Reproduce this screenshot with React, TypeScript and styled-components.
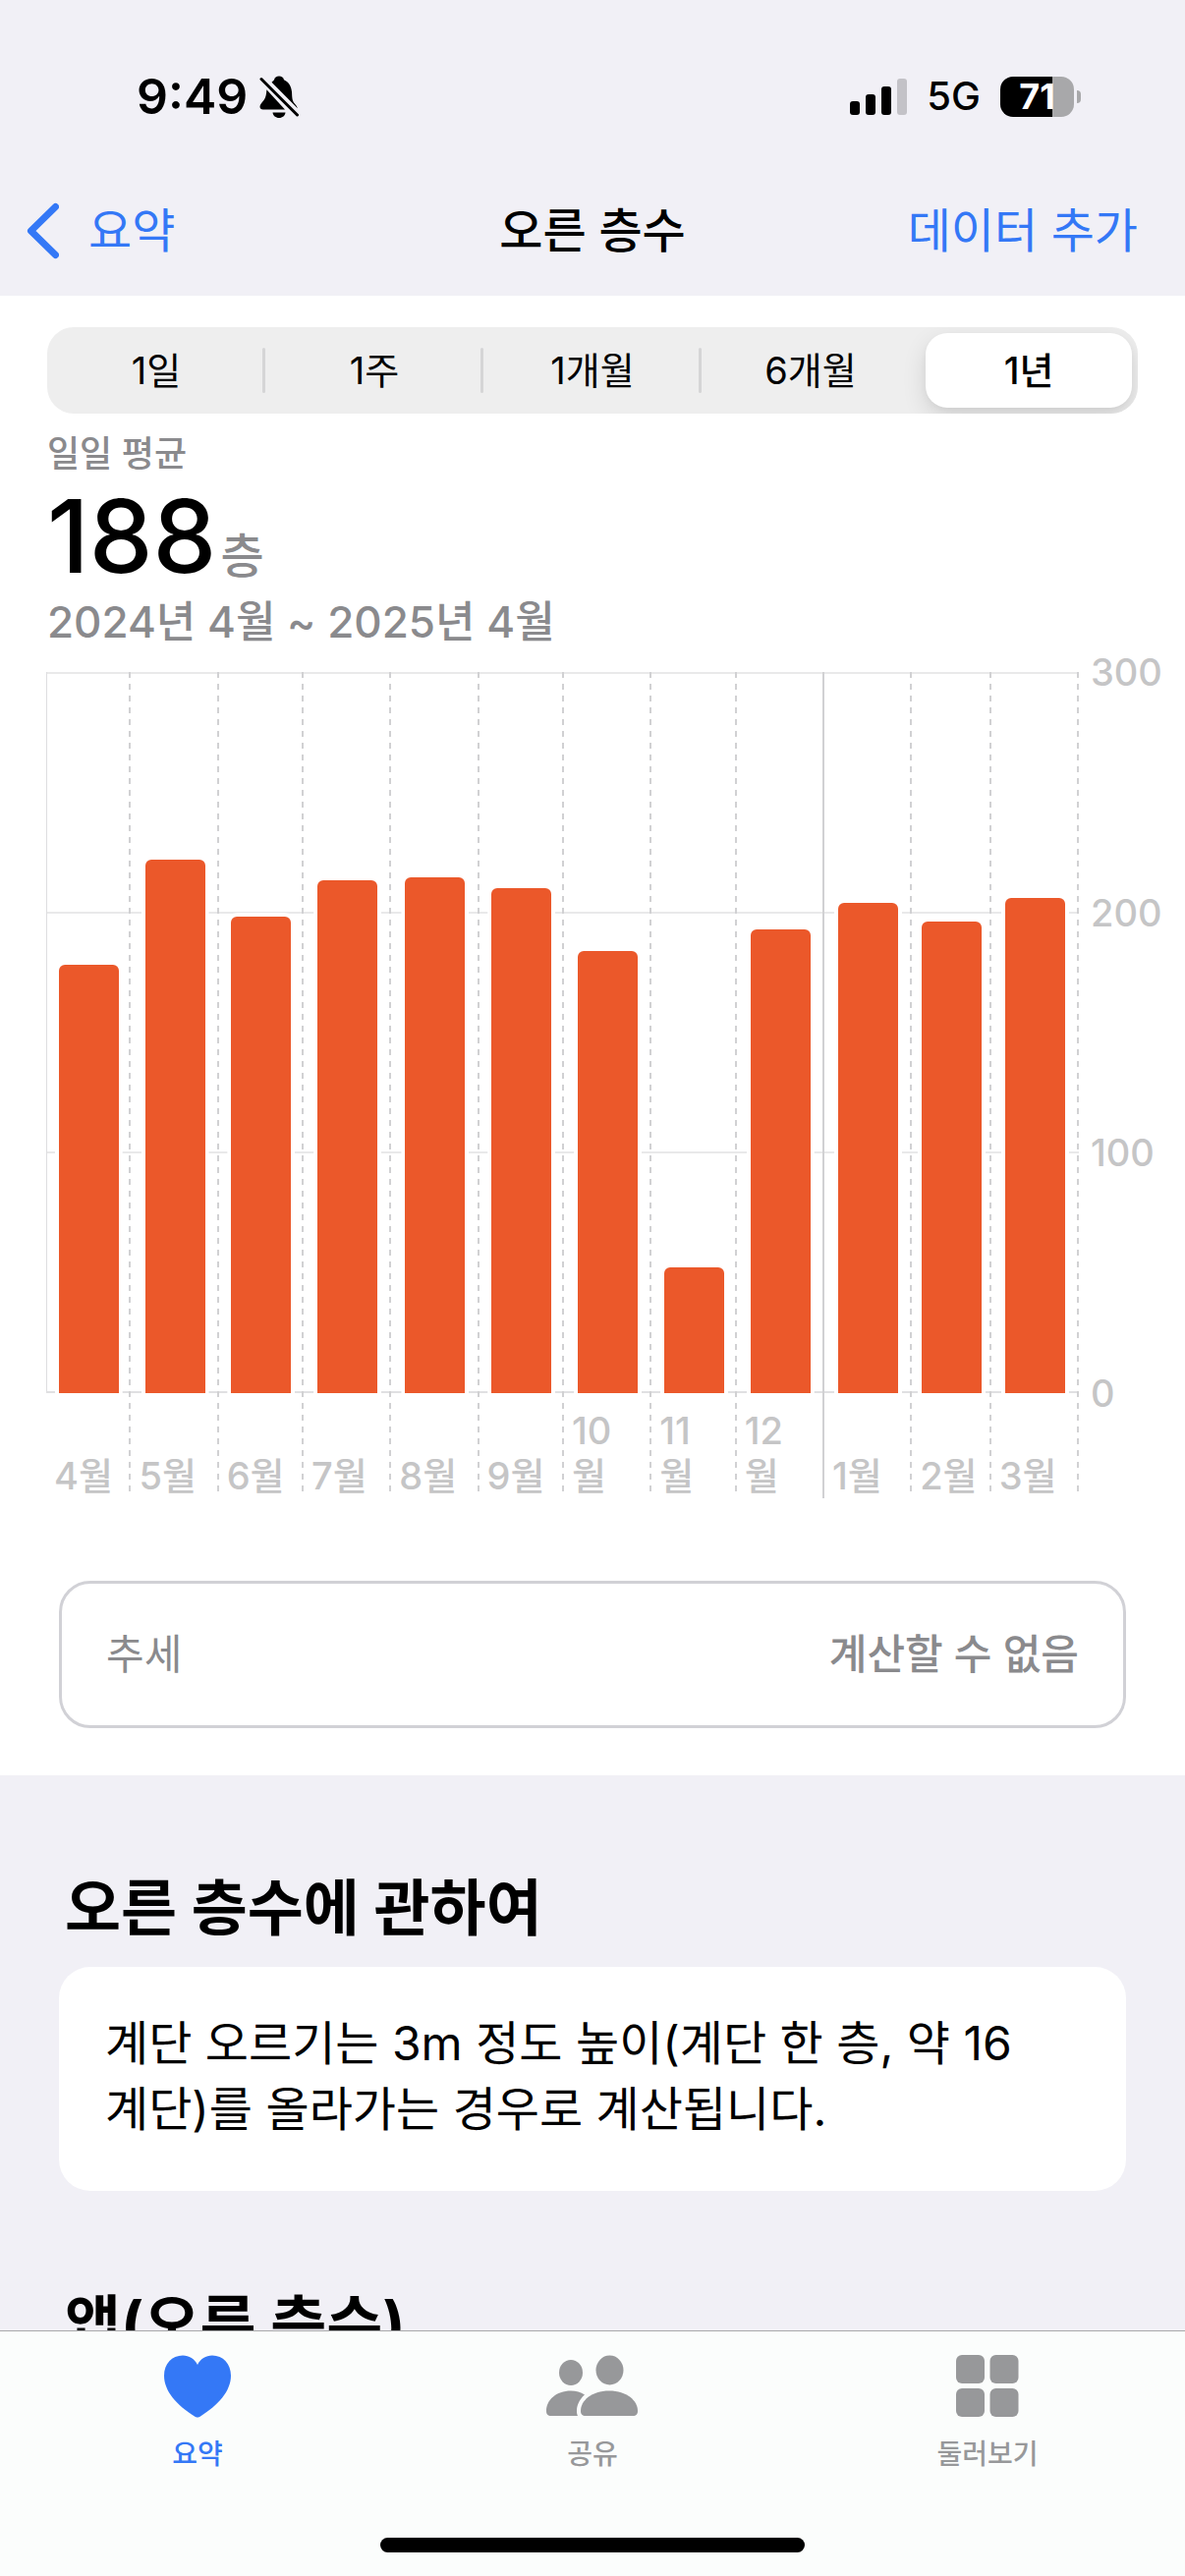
import React, { useState } from "react";
import styled, { createGlobalStyle } from "styled-components";

const GlobalStyle = createGlobalStyle`
  *, *::before, *::after { box-sizing: border-box; }
  body {
    margin: 0;
    background: #f1f0f6;
    color: #000;
    font-family: Inter, "Noto Sans CJK KR", sans-serif;
  }
  button, fieldset, input, h1, h2, p, dl, dt, dd {
    margin: 0;
    padding: 0;
    border: 0;
    font: inherit;
    color: inherit;
    background: none;
  }
`;

const Screen = styled.div`
  display: flex;
  flex-direction: column;
  height: 100vh;
  overflow: hidden;
`;

/* ---------- status bar ---------- */

const StatusBar = styled.div`
  display: flex;
  justify-content: space-between;
  align-items: center;
  height: 168px;
  padding: 28px 106px 0 139px;
`;

const StatusGroup = styled.div<{ $gap: number }>`
  display: flex;
  align-items: center;
  gap: ${(p) => p.$gap}px;
`;

const Clock = styled.span`
  font-size: 50px;
  line-height: 56px;
  font-weight: 600;
`;

const Signal = styled.span`
  display: flex;
  align-items: flex-end;
  gap: 6px;
  height: 38px;
`;

const SignalBar = styled.i<{ $height: number; $off?: boolean }>`
  width: 10px;
  height: ${(p) => p.$height}px;
  border-radius: 3px;
  background: ${(p) => (p.$off ? "#c3c2c7" : "#000")};
`;

const Network = styled.span`
  font-size: 40px;
  line-height: 44px;
  font-weight: 500;
`;

const BatteryWrap = styled.span`
  display: flex;
  align-items: center;
  gap: 3px;
`;

const BatteryBody = styled.span`
  width: 75px;
  height: 41px;
  border-radius: 13px;
  background: linear-gradient(to right, #000 71%, #a8a8aa 71%);
  color: #fff;
  font-size: 36px;
  line-height: 41px;
  font-weight: 700;
  text-align: center;
`;

const BatteryCap = styled.i`
  width: 4px;
  height: 13px;
  border-radius: 0 4px 4px 0;
  background: #a8a8aa;
`;

/* ---------- navigation bar ---------- */

const NavBar = styled.header`
  display: grid;
  grid-template-columns: 1fr auto 1fr;
  align-items: center;
  height: 133px;
  padding: 0 26px;
  font-size: 48px;
  line-height: 66px;
`;

const NavButton = styled.button<{ $end?: boolean }>`
  display: flex;
  align-items: center;
  gap: 30px;
  justify-self: ${(p) => (p.$end ? "end" : "start")};
  padding-right: ${(p) => (p.$end ? 22 : 0)}px;
  color: #3478f6;
  cursor: pointer;
`;

const NavTitle = styled.h1`
  font-weight: 500;
`;

/* ---------- content ---------- */

const Content = styled.main`
  flex: 1;
  min-height: 0;
  overflow-y: auto;
  scrollbar-width: none;
`;

const DataPanel = styled.section`
  padding: 32px 0 48px;
  background: #fff;
`;

const Segments = styled.fieldset`
  display: flex;
  height: 88px;
  margin: 0 48px;
  border-radius: 27px;
  background: #eee;
  overflow: hidden;
`;

const Segment = styled.label<{ $divided: boolean }>`
  display: flex;
  flex: 1;
  align-items: center;
  font-size: 38px;
  line-height: 46px;
  cursor: pointer;

  &::after {
    content: "";
    width: 3px;
    height: 46px;
    border-radius: 2px;
    background: ${(p) => (p.$divided ? "#d5d5d6" : "transparent")};
  }
`;

const SegmentInput = styled.input`
  appearance: none;
  width: 0;
  height: 0;
`;

const SegmentText = styled.span`
  display: flex;
  flex: 1;
  align-items: center;
  justify-content: center;
  height: 76px;
  margin: 0 3px 0 6px;
  border-radius: 22px;

  ${SegmentInput}:checked + & {
    background: #fff;
    font-weight: 500;
    box-shadow: 0 9px 24px rgba(0, 0, 0, 0.12), 0 3px 6px rgba(0, 0, 0, 0.04);
  }
`;

const Summary = styled.div`
  display: flex;
  flex-direction: column;
  padding: 16px 48px 0;
  color: #8a8a8d;
  font-weight: 500;
`;

const SummaryLabel = styled.span`
  font-size: 36px;
  line-height: 50px;
`;

const SummaryValue = styled.span`
  display: flex;
  align-items: baseline;
  gap: 4px;
  font-size: 48px;
  line-height: 60px;
`;

const SummaryNumber = styled.strong`
  color: #000;
  font-size: 103px;
  line-height: 118px;
  font-weight: 500;
`;

const SummaryRange = styled.span`
  font-size: 44px;
  line-height: 56px;
`;

/* ---------- chart ---------- */

const Chart = styled.div`
  display: flex;
  gap: 12px;
  margin-top: 23px;
  padding-left: 47px;
`;

const Plot = styled.div`
  display: grid;
  flex: 1;
  grid-template-rows: 734px 107px;
`;

const GridBands = styled.div`
  display: grid;
  grid-area: 1 / 1;
  grid-template-rows: repeat(3, 1fr);
  border-left: 1px solid #dedee0;
  border-bottom: 2px solid #e0e0e2;
`;

const Band = styled.i`
  border-top: 2px solid #e9e9ea;
`;

const Months = styled.div`
  display: flex;
  grid-area: 1 / 1 / 3 / 2;
`;

const Month = styled.div<{ $days: number; $yearEnd: boolean }>`
  display: grid;
  flex: ${(p) => p.$days} 0 0;
  min-width: 0;
  grid-template-rows: 734px 107px;
  background: ${(p) =>
      p.$yearEnd
        ? "linear-gradient(#d1d1d3, #d1d1d3)"
        : "repeating-linear-gradient(to bottom, #d1d1d3 0 6px, transparent 6px 12px)"}
    right top / 2px ${(p) => (p.$yearEnd ? "841px" : "836px")} no-repeat;
`;

const Bar = styled.div`
  align-self: end;
  justify-self: center;
  width: 61px;
  border-radius: 6px 6px 0 0;
  background: #eb582a;
  box-shadow: 0 0 0 4px #fff;
  clip-path: inset(-4px -4px 0 -4px);
`;

const MonthLabel = styled.span`
  align-self: end;
  padding: 0 14px 0 8px;
  color: #c5c5c6;
  font-size: 38px;
  line-height: 46px;
  font-weight: 500;
`;

const Scale = styled.div`
  display: flex;
  flex-direction: column;
  justify-content: space-between;
  width: 96px;
  height: 780px;
  margin-top: -23px;
  color: #c5c5c6;
  font-size: 38px;
  line-height: 46px;
  font-weight: 500;
`;

const Trend = styled.dl`
  display: flex;
  align-items: center;
  justify-content: space-between;
  height: 150px;
  margin: 84px 60px 0;
  padding: 0 45px;
  border: 3px solid #d1d1d6;
  border-radius: 32px;
  color: #8a8a8d;
  font-size: 42px;
  line-height: 56px;
`;

const TrendValue = styled.dd`
  font-weight: 500;
`;

const AboutSection = styled.section`
  padding: 91px 60px 0;
`;

const SectionTitle = styled.h2`
  padding: 0 6px;
  font-size: 62px;
  line-height: 90px;
  font-weight: 700;
`;

const AboutCard = styled.p`
  margin: 14px 0 0;
  padding: 44px 47px 50px;
  border-radius: 32px;
  background: #fff;
  font-size: 48px;
  line-height: 67px;
  word-break: keep-all;
`;

/* ---------- tab bar ---------- */

const TabBar = styled.nav`
  display: grid;
  grid-template-columns: repeat(3, 1fr);
  grid-template-rows: 1fr auto;
  height: 250px;
  border-top: 1px solid #a9a9ab;
  background: #fbfdfc;
`;

const Tab = styled.a<{ $active?: boolean }>`
  display: flex;
  flex-direction: column;
  align-items: center;
  gap: 17px;
  padding-top: 24px;
  color: ${(p) => (p.$active ? "#3478f6" : "#97989a")};
  font-size: 28px;
  line-height: 40px;
  font-weight: 500;
  text-decoration: none;
`;

const HomeIndicator = styled.i`
  grid-column: 1 / -1;
  justify-self: center;
  width: 432px;
  height: 15px;
  margin-bottom: 24px;
  border-radius: 8px;
  background: #000;
`;

/* ---------- icons ---------- */

const BellOff = () => (
  <svg width="40" height="43" viewBox="0 0 40 43" aria-hidden="true">
    <path
      d="M12.5 6.8C13.6 5.5 14.6 5 15 4.2 15.6 1.8 17.4.5 20 .5s4.400 1.300 5 3.700C29.800 6.500 32.500 10.500 33 16.500c.300 6 .300 8.500 2.500 11.500 1.800 2.200 3 3.600 3.300 5.300Z"
    />
    <path d="M7.400 14.200 26 34.500H3.800C1.700 34.500.5 33.200.5 31.500c0-2.300 2-3.800 4-6.500 2.200-3 2.500-6 2.900-10.800Z" />
    <path d="M13.500 37.500h13c-.4 3.200-3 5.500-6.500 5.500s-6.100-2.300-6.500-5.500Z" />
    <path d="M2 3.500 38.500 40" stroke="#f1f0f6" strokeWidth="7" />
    <path d="M2 3.500 38.500 40" stroke="#000" strokeWidth="3" strokeLinecap="round" />
  </svg>
);

const Chevron = () => (
  <svg width="34" height="58" viewBox="0 0 34 58" fill="none" aria-hidden="true">
    <path d="M30.500 4.500 5.500 29l25 24.500" stroke="currentColor" strokeWidth="7" strokeLinecap="round" strokeLinejoin="round" />
  </svg>
);

const Heart = () => (
  <svg width="68" height="64" viewBox="0 0 68 64" fill="currentColor" aria-hidden="true">
    <path d="M34 10C31 4 25.500.5 19 .5 8 .5 0 9 0 21c0 16 13 30 31 41.500 1.200.8 1.900 1 3 1s1.800-.2 3-1C55 51 68 37 68 21 68 9 60 .5 49 .5 42.500.5 37 4 34 10Z" />
  </svg>
);

const People = () => (
  <svg width="94" height="64" viewBox="0 0 94 64" fill="currentColor" aria-hidden="true">
    <ellipse cx="25" cy="18" rx="12" ry="13" />
    <path d="M5 62c-3.500 0-5-1.500-5-5C0 46 10 36.500 25 36.500c5.500 0 10 1.500 14 4C33 46 31 52 31 57c0 2 .3 3.600 1 5Z" />
    <ellipse cx="64.500" cy="15.500" rx="14" ry="15" />
    <path d="M40 62c-3.500 0-5-1.500-5-5 0-10.500 11-20.500 29-20.500S93 46.500 93 57c0 3.500-1.500 5-5 5Z" />
  </svg>
);

const Squares = () => (
  <svg width="64" height="64" viewBox="0 0 64 64" fill="currentColor" aria-hidden="true">
    <rect x="0" y="0" width="29" height="29" rx="6" />
    <rect x="34.500" y="0" width="29" height="29" rx="6" />
    <rect x="0" y="34" width="29" height="29" rx="6" />
    <rect x="34.500" y="34" width="29" height="29" rx="6" />
  </svg>
);

/* ---------- data ---------- */

const RANGES = ["1일", "1주", "1개월", "6개월", "1년"];
const MAX_FLOORS = 300;
const MONTHS = [
  { label: "4월", days: 30, floors: 178.4 },
  { label: "5월", days: 31, floors: 221.8 },
  { label: "6월", days: 30, floors: 198.1 },
  { label: "7월", days: 31, floors: 213.2 },
  { label: "8월", days: 31, floors: 214.5 },
  { label: "9월", days: 30, floors: 210 },
  { label: "10 월", days: 31, floors: 183.8 },
  { label: "11 월", days: 30, floors: 52.4 },
  { label: "12 월", days: 31, floors: 193 },
  { label: "1월", days: 31, floors: 203.8 },
  { label: "2월", days: 28, floors: 196 },
  { label: "3월", days: 31, floors: 205.9 },
];

export default function App() {
  const [range, setRange] = useState("1년");

  return (
    <Screen lang="ko">
      <GlobalStyle />
      <StatusBar>
        <StatusGroup $gap={12}>
          <Clock>9:49</Clock>
          <BellOff />
        </StatusGroup>
        <StatusGroup $gap={20}>
          <Signal>
            <SignalBar $height={14} />
            <SignalBar $height={21} />
            <SignalBar $height={29} />
            <SignalBar $height={37} $off />
          </Signal>
          <Network>5G</Network>
          <BatteryWrap>
            <BatteryBody>71</BatteryBody>
            <BatteryCap />
          </BatteryWrap>
        </StatusGroup>
      </StatusBar>

      <NavBar>
        <NavButton type="button">
          <Chevron />
          요약
        </NavButton>
        <NavTitle>오른 층수</NavTitle>
        <NavButton type="button" $end>
          데이터 추가
        </NavButton>
      </NavBar>

      <Content>
        <DataPanel>
          <Segments aria-label="기간">
            {RANGES.map((name, i) => (
              <Segment key={name} $divided={i < 3}>
                <SegmentInput
                  type="radio"
                  name="range"
                  checked={range === name}
                  onChange={() => setRange(name)}
                />
                <SegmentText>{name}</SegmentText>
              </Segment>
            ))}
          </Segments>

          <Summary>
            <SummaryLabel>일일 평균</SummaryLabel>
            <SummaryValue>
              <SummaryNumber>188</SummaryNumber>
              <span>층</span>
            </SummaryValue>
            <SummaryRange>2024년 4월 ~ 2025년 4월</SummaryRange>
          </Summary>

          <Chart>
            <Plot>
              <GridBands>
                <Band />
                <Band />
                <Band />
              </GridBands>
              <Months>
                {MONTHS.map((m) => (
                  <Month key={m.label} $days={m.days} $yearEnd={m.label === "12 월"}>
                    <Bar style={{ height: `${(m.floors / MAX_FLOORS) * 100}%` }} />
                    <MonthLabel>{m.label}</MonthLabel>
                  </Month>
                ))}
              </Months>
            </Plot>
            <Scale>
              <span>300</span>
              <span>200</span>
              <span>100</span>
              <span>0</span>
            </Scale>
          </Chart>

          <Trend>
            <dt>추세</dt>
            <TrendValue>계산할 수 없음</TrendValue>
          </Trend>
        </DataPanel>

        <AboutSection>
          <SectionTitle>오른 층수에 관하여</SectionTitle>
          <AboutCard>
            계단 오르기는 3m 정도 높이(계단 한 층, 약 16 계단)를 올라가는 경우로 계산됩니다.
          </AboutCard>
        </AboutSection>
        <AboutSection>
          <SectionTitle>앱(오른 층수)</SectionTitle>
        </AboutSection>
      </Content>

      <TabBar>
        <Tab href="#summary" $active>
          <Heart />
          요약
        </Tab>
        <Tab href="#sharing">
          <People />
          공유
        </Tab>
        <Tab href="#browse">
          <Squares />
          둘러보기
        </Tab>
        <HomeIndicator />
      </TabBar>
    </Screen>
  );
}
